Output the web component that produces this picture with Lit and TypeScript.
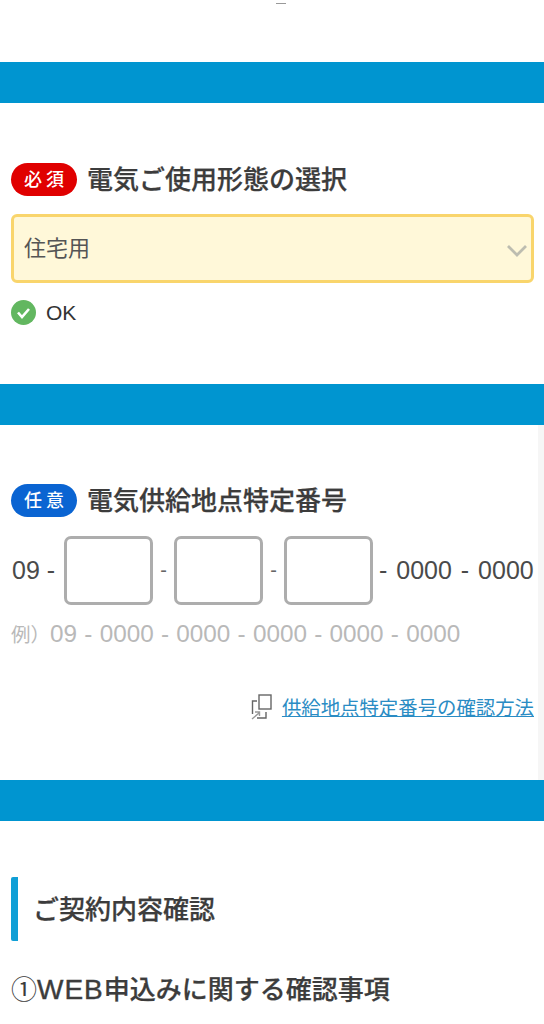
import { LitElement, html, css } from "lit";
import { customElement } from "lit/decorators.js";

@customElement("app-root")
export class AppRoot extends LitElement {
  static styles = css`
    :host {
      display: block;
      width: 544px;
      height: 1024px;
      overflow: hidden;
      background: #fff;
      color: #3c3c3c;
      font-family: "Noto Sans CJK JP", "Liberation Sans", sans-serif;
    }
    .top { height: 62px; display: flex; justify-content: center; box-sizing: border-box; padding: 3px 0 0 18px; }
    .dash { width: 10px; height: 1px; background: #999; }
    .bar { height: 41px; background: #0095d0; }
    .s1 { height: 281px; box-sizing: border-box; padding: 60px 10px 0 11px; display: flex; flex-direction: column; }
    .s2 { height: 355px; box-sizing: border-box; padding: 59px 10px 0 11px; display: flex; flex-direction: column; position: relative; }
    .edge { position: absolute; right: 0; top: 0; bottom: 0; width: 6px; background: #f6f6f6; }
    .head { display: flex; align-items: center; gap: 10px; height: 33px; }
    .badge { width: 66px; height: 33px; border-radius: 17px; color: #fff; font-size: 18px; font-weight: 500; letter-spacing: 4px; display: flex; align-items: center; justify-content: center; padding: 0 0 3px 4px; box-sizing: border-box; line-height: 1; }
    .red { background: #e00000; }
    .blue { background: #0a64d2; }
    .title { font-size: 26px; font-weight: 500; line-height: 33px; white-space: nowrap; padding-bottom: 4px; -webkit-text-stroke: 0.25px #3c3c3c; }
    .select { margin-top: 18px; height: 69px; box-sizing: border-box; border: 3px solid #f9d56c; border-radius: 6px; background: #fff8d9; display: flex; align-items: center; justify-content: space-between; padding: 0 3px 0 10px; font-size: 22px; color: #555; }
    .select span { padding-bottom: 6px; }
    .ok { margin-top: 17px; display: flex; align-items: center; gap: 10px; font-size: 21px; font-family: "Liberation Sans", sans-serif; color: #333; height: 25px; }
    .number { margin-top: 19px; display: flex; align-items: center; height: 69px; font-size: 25px; font-family: "Liberation Sans", sans-serif; color: #4a4a4a; white-space: nowrap; }
    .box { width: 89px; height: 69px; box-sizing: border-box; border: 3px solid #adadad; border-radius: 7px; background: #fff; flex: none; }
    .box.lead-box { margin-left: 1px; }
    .sep { width: 21px; text-align: center; font-size: 20px; flex: none; color: #666; }
    .first { width: 52px; padding-left: 1px; box-sizing: border-box; flex: none; }
    .tail { margin-left: 6px; flex: none; word-spacing: 2px; }
    .example { margin-top: 12px; font-size: 24.3px; line-height: 34px; color: #b9b9b9; white-space: nowrap; word-spacing: 0.5px; font-family: "Liberation Sans", "Noto Sans CJK JP", sans-serif; }
    .example .ja { font-size: 19.5px; font-family: "Noto Sans CJK JP", sans-serif; }
    .linkrow { margin-top: 42px; display: flex; justify-content: flex-end; align-items: center; gap: 9px; }
    .link { font-size: 19.4px; line-height: 28px; color: #2a8cc4; text-decoration: underline; white-space: nowrap; }
    .s3 { padding: 56px 0 0 11px; }
    .lead { border-left: 7px solid #109fd6; border-radius: 2px; height: 64px; display: flex; align-items: center; padding: 0 0 4px 15px; box-sizing: border-box; font-size: 26px; font-weight: 500; -webkit-text-stroke: 0.25px #3c3c3c; }
    .sub { margin-top: 29px; font-size: 26px; font-weight: 500; line-height: 36px; white-space: nowrap; -webkit-text-stroke: 0.25px #3c3c3c; }
    .sub .num { font-weight: 400; -webkit-text-stroke: 0; }
    .sub .web { font-family: "Liberation Sans", sans-serif; font-size: 28px; letter-spacing: 1px; -webkit-text-stroke: 0.4px #3c3c3c; }
  `;

  render() {
    return html`
      <div class="top"><div class="dash"></div></div>
      <div class="bar"></div>
      <section class="s1">
        <div class="head">
          <span class="badge red">必須</span>
          <span class="title">電気ご使用形態の選択</span>
        </div>
        <div class="select">
          <span>住宅用</span>
          <svg width="22" height="20" viewBox="0 0 22 20" fill="none" stroke="#bdbdb0" stroke-width="2.8"><path d="M2 7l9 9 9-9"/></svg>
        </div>
        <div class="ok">
          <svg width="25" height="25" viewBox="0 0 25 25"><circle cx="12.5" cy="12.5" r="12.5" fill="#62b760"/><path d="M7 12.5l4 4.5 7-8" fill="none" stroke="#fff" stroke-width="2.6"/></svg>
          <span>OK</span>
        </div>
      </section>
      <div class="bar"></div>
      <section class="s2">
        <div class="edge"></div>
        <div class="head">
          <span class="badge blue">任意</span>
          <span class="title">電気供給地点特定番号</span>
        </div>
        <div class="number">
          <span class="first">09 -</span>
          <span class="box lead-box"></span><span class="sep">-</span>
          <span class="box"></span><span class="sep">-</span>
          <span class="box"></span>
          <span class="tail">- 0000 - 0000</span>
        </div>
        <div class="example"><span class="ja">例）</span>09 - 0000 - 0000 - 0000 - 0000 - 0000</div>
        <div class="linkrow">
          <svg width="22" height="26" viewBox="0 0 22 26" fill="none" stroke="#666" stroke-width="1.4">
            <rect x="8" y="1" width="12" height="14" fill="#fff"/>
            <path d="M6 7H1.5v13"/>
            <path d="M15 18v6H6"/>
            <path d="M1 25l7-6M4 18h4.5v4" stroke="#999"/>
          </svg>
          <span class="link">供給地点特定番号の確認方法</span>
        </div>
      </section>
      <div class="bar"></div>
      <section class="s3">
        <div class="lead">ご契約内容確認</div>
        <div class="sub"><span class="num">①</span><span class="web">WEB</span>申込みに関する確認事項</div>
      </section>
    `;
  }
}
